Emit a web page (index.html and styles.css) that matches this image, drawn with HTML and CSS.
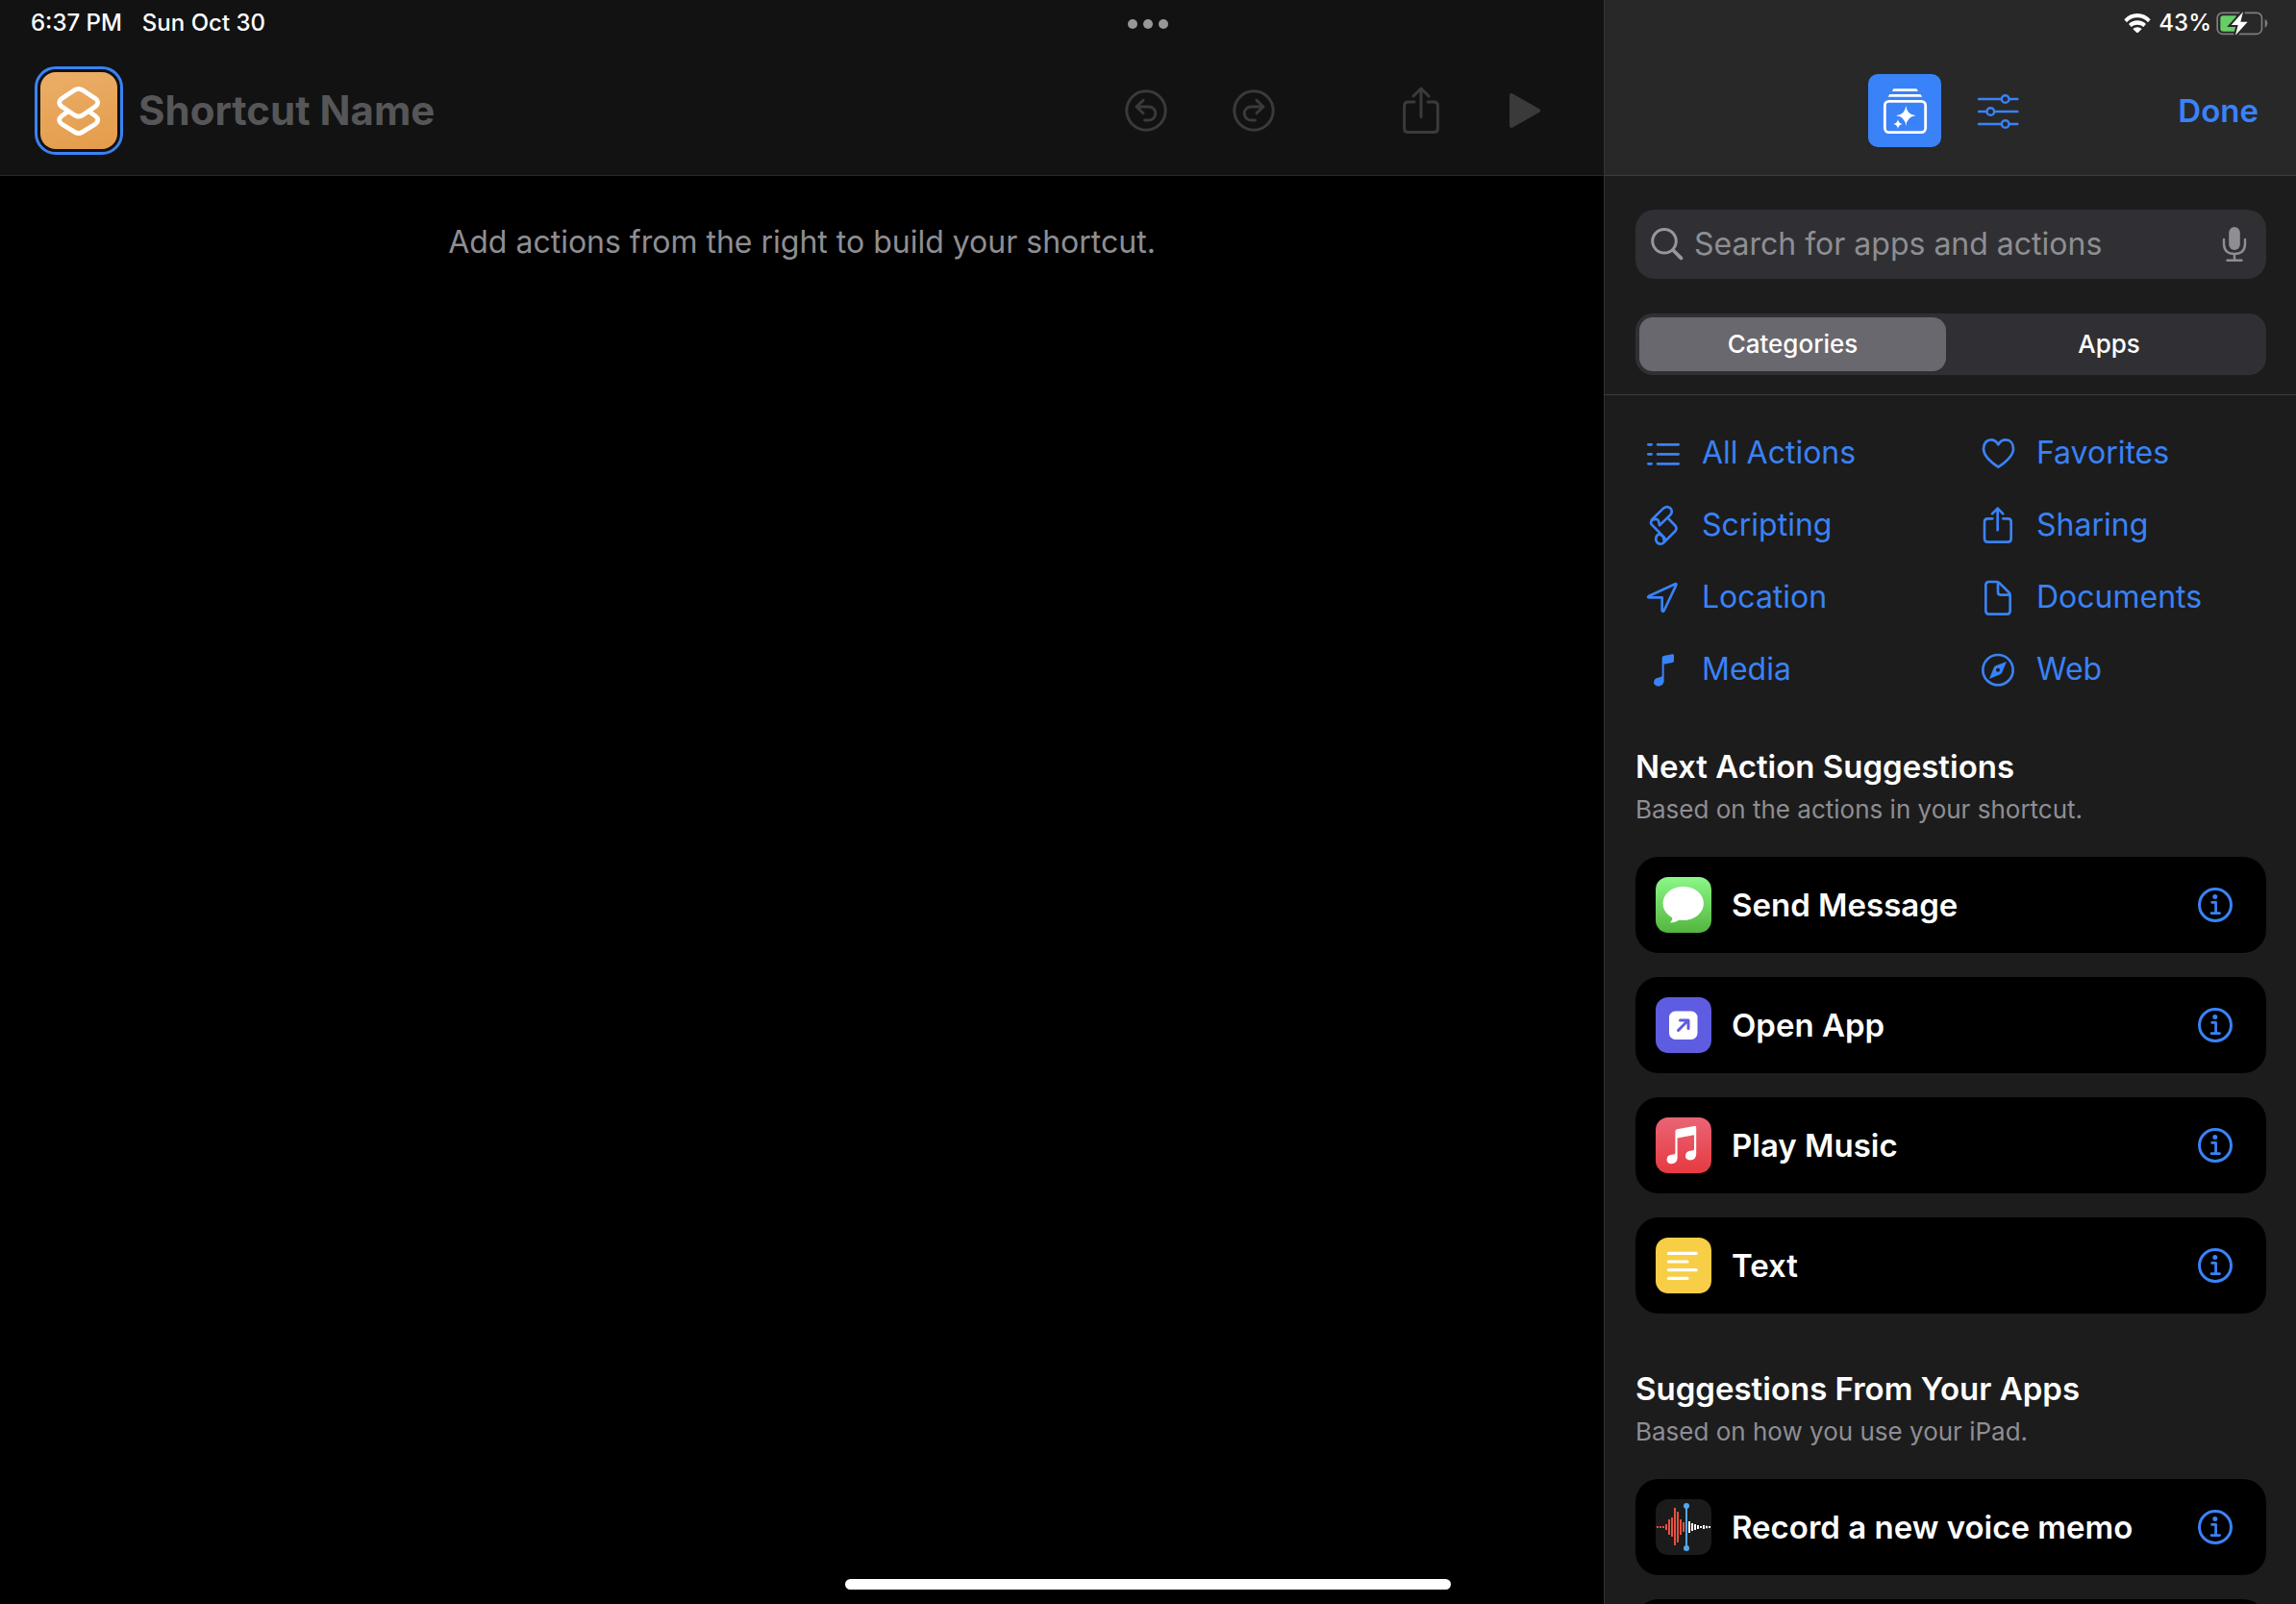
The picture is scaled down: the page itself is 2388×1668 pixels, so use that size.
FILE: index.html
```html
<!DOCTYPE html>
<html lang="en">
<head>
<meta charset="utf-8">
<meta name="viewport" content="width=device-width, initial-scale=1">
<title>Shortcuts</title>
<link rel="stylesheet" href="styles.css">
</head>
<body>
<svg class="defs" aria-hidden="true">
  <symbol id="info" viewBox="0 0 36 36">
    <circle cx="18" cy="18" r="16.500" fill="none" stroke="currentColor" stroke-width="3"/>
    <circle cx="17.800" cy="9.600" r="2.500" fill="currentColor"/>
    <path d="M14.600 15.400H18.600V26.400M14 26.600H22.600" fill="none" stroke="currentColor" stroke-width="2.700" stroke-linecap="round" stroke-linejoin="round"/>
  </symbol>
</svg>

<div class="app">
  <main class="editor">
    <header class="bar">
      <div class="status">
        <span>6:37 PM</span>
        <span>Sun Oct 30</span>
      </div>
      <div class="toolbar">
        <button class="app-icon" aria-label="Choose icon">
          <svg width="80" height="80" viewBox="0 0 80 80" fill="none" stroke="#fff" stroke-width="4.8" stroke-linejoin="round">
            <path d="M35.8 18.6Q39.7 16.2 43.6 18.6L57.2 27.4Q62.4 31.6 57.2 35.8L43.6 44.9Q39.7 47.3 35.8 44.9L22.2 35.8Q17 31.6 22.2 27.4Z"/>
            <path d="M28.6 41L22.2 45.6Q17 49.8 22.2 54L35.8 62.4Q39.7 64.8 43.6 62.4L57.2 54Q62.4 49.8 57.2 45.6L50.8 41"/>
          </svg>
        </button>
        <input class="name" type="text" placeholder="Shortcut Name" aria-label="Shortcut Name">
        <div class="tools">
          <button aria-label="Undo">
            <svg width="44" height="44" viewBox="0 0 44 44" class="line">
              <circle cx="22" cy="22" r="20.2"/>
              <path d="M19 11.4L12 18L19 24.6M12.4 18H24.8a7 7 0 0 1 0 14H20.6"/>
            </svg>
          </button>
          <button aria-label="Redo">
            <svg width="44" height="44" viewBox="0 0 44 44" class="line">
              <circle cx="22" cy="22" r="20.2"/>
              <path d="M25 11.4L32 18L25 24.6M31.6 18H19.2a7 7 0 0 0 0 14H23.4"/>
            </svg>
          </button>
          <button class="share" aria-label="Share">
            <svg width="40" height="50" viewBox="0 0 40 50" class="line">
              <path d="M13 16H6.5Q2.6 16 2.6 20V43.500Q2.600 47.500 6.500 47.500H33.500Q37.400 47.500 37.400 43.500V20Q37.400 16 33.500 16H27"/>
              <path d="M20 31.500V2.600M12 10L20 2L28 10"/>
            </svg>
          </button>
          <button aria-label="Run">
            <svg width="40" height="40" viewBox="0 0 40 40">
              <path d="M4 4.500Q4 1.200 7.400 2.400L35 18.200Q37.200 20 35 21.800L7.400 37.600Q4 38.800 4 35.500Z" fill="currentColor"/>
            </svg>
          </button>
        </div>
      </div>
    </header>
    <p class="hint">Add actions from the right to build your shortcut.</p>
  </main>

  <aside class="library">
    <header class="bar bar-light">
      <div class="status status-end">
        <svg class="wifi" width="28" height="20" viewBox="840 41 84 60" fill="#fff" role="img" aria-label="Wi-Fi">
          <path d="M841 60Q858 41 882 41T923 60L915 69Q902 54 882 54T849 69Z"/>
          <path d="M855 74Q866 63 882 63T909 74L901 83Q893 76 882 76T863 83Z"/>
          <path d="M868 89Q873 84 882 84T896 89L882 103Z"/>
        </svg>
        <span class="percent">43%</span>
        <svg width="54" height="25" viewBox="1124 35 162 75" role="img" aria-label="Battery charging">
          <rect x="1127.500" y="39" width="139" height="66" rx="16" fill="none" stroke="#7e7e7e" stroke-width="5"/>
          <path d="M1276 58Q1284 63 1284 72T1276 86Z" fill="#7e7e7e"/>
          <path d="M1146 48H1186V97H1146Q1137 97 1137 88V57Q1137 48 1146 48Z" fill="#67ce67"/>
          <path d="M1208 36L1171 77H1192L1184 109L1222 67H1200Z" fill="#fff" stroke="#282828" stroke-width="12" paint-order="stroke"/>
        </svg>
      </div>
      <div class="panel-nav">
        <div class="modes">
          <button class="mode mode-on" aria-label="Action library">
            <svg width="76" height="76" viewBox="39 231 228 228">
              <path d="M118 277H190L195 285H114ZM106 294H202L208 302H101Z" fill="#fff"/>
              <rect x="91" y="316" width="127" height="97" rx="13" fill="none" stroke="#fff" stroke-width="8.500"/>
              <path d="M157 330Q160 358 188 361Q160 364 157 393Q154 364 126 361Q154 358 157 330Z" fill="#fff"/>
              <path d="M132 372Q134 385 147 387Q134 389 132 402Q130 389 117 387Q130 385 132 372Z" fill="#fff"/>
            </svg>
          </button>
          <button class="mode" aria-label="Shortcut settings">
            <svg width="76" height="76" viewBox="328 231 228 228" fill="none" stroke="currentColor" stroke-width="7.500" stroke-linecap="round">
              <path d="M382 309H452M479 309H503M382 348H406M432 348H503M382 387H452M479 387H503"/>
              <circle cx="465" cy="309" r="11.500"/><circle cx="419" cy="348" r="11.500"/><circle cx="465" cy="387" r="11.500"/>
            </svg>
          </button>
        </div>
        <button class="done">Done</button>
      </div>
    </header>

    <div class="filters">
      <label class="search">
        <svg width="34" height="34" viewBox="0 0 34 34" fill="none" stroke="#97979d" stroke-linecap="round">
          <circle cx="14" cy="13.800" r="12.300" stroke-width="3"/><path d="M23 23L31.400 31.400" stroke-width="3.800"/>
        </svg>
        <input type="text" placeholder="Search for apps and actions" aria-label="Search for apps and actions">
        <button class="mic" aria-label="Dictate">
          <svg width="26" height="38" viewBox="0 0 26 38">
            <rect x="7.200" y="1" width="11.600" height="24" rx="5.800" fill="#8e8e93"/>
            <path d="M2 14V18Q2 29 13 29T24 18V14M13 29V35.400M5.500 35.700H20.500" fill="none" stroke="#8e8e93" stroke-width="2.400" stroke-linecap="round"/>
          </svg>
        </button>
      </label>
      <div class="segments" role="radiogroup" aria-label="Browse by">
        <label><input type="radio" name="browse" checked><span>Categories</span></label>
        <label><input type="radio" name="browse"><span>Apps</span></label>
      </div>
    </div>

    <div class="scroll">
      <nav class="categories" aria-label="Categories">
        <a href="#all">
          <svg viewBox="24 27 132 132"><path d="M43 67H53M72 67H137M43 97H53M72 97H137M43 127H53M72 127H137"/></svg>
          All Actions</a>
        <a href="#favorites">
          <svg viewBox="1068 27 132 132"><path d="M1135 137C1120 127 1089 105 1089 80C1089 62 1100 52 1112 52C1123 52 1131 59 1135 67C1139 59 1147 52 1159 52C1172 52 1182 62 1182 80C1182 105 1150 127 1135 137Z"/></svg>
          Favorites</a>
        <a href="#scripting">
          <svg viewBox="24 255 132 132"><path d="M54 304L90 269Q102 260 111 268Q121 277 112 289L78 322L76 311Q72 299 60 304Q52 303 51 315Q52 319 57 323L92 359Q99 367 91 376M78 349Q65 354 67 368Q70 380 81 380Q87 380 91 376L128 339Q133 332 128 324L104 299M79 350Q93 354 92 372"/></svg>
          Scripting</a>
        <a href="#sharing">
          <svg viewBox="1068 255 132 132"><path d="M1117 301H1102Q1092 301 1092 311V364Q1092 374 1102 374H1165Q1175 374 1175 364V311Q1175 301 1165 301H1150M1133 337V269M1116 286L1133 269L1150 286"/></svg>
          Sharing</a>
        <a href="#location">
          <svg viewBox="24 480 132 132"><path d="M127 505L44 543Q40 547 45 547H86V588Q89 594 92 588L130 508Q131 503 127 505Z"/></svg>
          Location</a>
        <a href="#documents">
          <svg viewBox="1068 480 132 132"><path d="M1106 498H1130Q1135 498 1139 502L1168 531Q1172 535 1172 540V589Q1172 599 1162 599H1106Q1096 599 1096 589V508Q1096 498 1106 498ZM1134 500V530Q1134 539 1143 539H1171"/></svg>
          Documents</a>
        <a href="#media">
          <svg viewBox="24 700 132 132"><path class="solid" d="M86 731Q86 725 91 724L118 719Q123 718 123 723V740Q123 744 119 745L92 750V803Q91 818 75 819Q60 818 60 806Q61 794 74 792Q86 790 86 785Z"/></svg>
          Media</a>
        <a href="#web">
          <svg viewBox="1068 700 132 132"><circle cx="1134" cy="768" r="47"/><path class="solid" fill-rule="evenodd" d="M1161 742L1147 776Q1145 780 1141 782L1107 796L1121 761Q1123 757 1127 755ZM1134 762A6 6 0 1 0 1134 774A6 6 0 1 0 1134 762Z"/></svg>
          Web</a>
      </nav>

      <section class="group">
        <h2>Next Action Suggestions</h2>
        <p>Based on the actions in your shortcut.</p>
        <ul>
          <li>
            <svg class="tile tile-messages" viewBox="0 0 58 58" fill="#fff"><ellipse cx="28.700" cy="27.500" rx="21.200" ry="17.600"/><path d="M17 39Q18.500 44 15 47.400Q21 47.500 26 43.500Z"/></svg>
            <span>Send Message</span>
            <button aria-label="About Send Message"><svg class="info"><use href="#info"/></svg></button>
          </li>
          <li>
            <svg class="tile tile-open" viewBox="0 0 58 58"><rect x="14" y="14.500" width="29.500" height="29.500" rx="6.500" fill="#fff"/><path d="M23.500 34.500L33.600 24.300M25.500 24H34V32.500" fill="none" stroke="#5e5ce0" stroke-width="3" stroke-linecap="round" stroke-linejoin="round"/></svg>
            <span>Open App</span>
            <button aria-label="About Open App"><svg class="info"><use href="#info"/></svg></button>
          </li>
          <li>
            <svg class="tile tile-music" viewBox="0 0 58 58" fill="#fff"><path d="M20.400 14.500Q20.400 12.600 22.200 12.200L40.200 8.900Q42.200 8.600 42.200 10.400V38.500Q41.600 44.300 35.800 44.500Q30.800 44 31 39.500Q31.400 35.600 36 34.800L39.200 34.200Q40 34 40 32.800V18.200L22.600 21.600V42.500Q22 48 16.500 48.300Q11.400 47.800 11.600 43.400Q12 39.500 16.400 38.800L19.600 38.200Q20.400 38 20.400 36.800Z"/></svg>
            <span>Play Music</span>
            <button aria-label="About Play Music"><svg class="info"><use href="#info"/></svg></button>
          </li>
          <li>
            <svg class="tile tile-text" viewBox="0 0 58 58" fill="none" stroke="#fff" stroke-width="3.200" stroke-linecap="round"><path d="M13.400 16.400H42.200M13.400 25H33M13.400 33.700H42.200M13.400 42.400H33"/></svg>
            <span>Text</span>
            <button aria-label="About Text"><svg class="info"><use href="#info"/></svg></button>
          </li>
        </ul>
      </section>

      <section class="group">
        <h2>Suggestions From Your Apps</h2>
        <p>Based on how you use your iPad.</p>
        <ul>
          <li>
            <svg class="tile tile-memo" viewBox="36 0 174 174" fill="none" stroke-width="6">
              <path stroke="#e5503f" d="M42 84V90M51 84V90M60 84V90M69 78V96M78 63V111M87 57V117M96 27V144M105 39V135M114 63V111M123 72V102"/>
              <path stroke="#fff" d="M141 69V105M150 75V99M159 78V96M168 81V93M177 84V90M186 81V93M195 83V91M204 84V90"/>
              <path stroke="#54a9f0" d="M132 20V153"/>
              <circle cx="132" cy="21" r="9" fill="#54a9f0"/><circle cx="132" cy="153" r="9" fill="#54a9f0"/>
            </svg>
            <span>Record a new voice memo</span>
            <button aria-label="About Record a new voice memo"><svg class="info"><use href="#info"/></svg></button>
          </li>
          <li></li>
        </ul>
      </section>
    </div>
  </aside>
</div>

<div class="multitask" aria-hidden="true"><i></i><i></i><i></i></div>
<div class="home-indicator" aria-hidden="true"></div>
</body>
</html>
```
FILE: styles.css
```css
* {
  box-sizing: border-box;
}

body {
  margin: 0;
  background: #000;
  color: #fff;
  font-family: Inter, "Liberation Sans", sans-serif;
  font-size: 32px;
  line-height: 40px;
}

button,
input {
  margin: 0;
  padding: 0;
  border: 0;
  background: none;
  color: inherit;
  font: inherit;
}

button {
  display: block;
}

input:focus {
  outline: none;
}

svg {
  display: block;
  flex: none;
}

h2,
p,
ul {
  margin: 0;
  padding: 0;
}

.defs {
  display: none;
}

.app {
  display: grid;
  grid-template-columns: minmax(0, 1fr) minmax(0, min(31vw, 720px));
  height: 100vh;
  overflow: hidden;
}

/* Header bars */

.bar {
  background: #121212;
  border-bottom: 1px solid #292929;
}

.bar-light {
  background: #282828;
  border-bottom-color: #3d3d3d;
}

.status {
  display: flex;
  align-items: center;
  gap: 21px;
  height: 48px;
  padding: 0 32px;
  font-size: 24px;
  font-weight: 500;
}

.status-end {
  justify-content: flex-end;
  gap: 5px;
  padding: 0 29px;
}

.wifi {
  margin-right: 3px;
}

.toolbar {
  display: flex;
  align-items: center;
  height: 134px;
  padding: 0 62px 0 36px;
}

.app-icon {
  padding: 3px;
  border: 3px solid #3a82f7;
  border-radius: 22px;
}

.app-icon svg {
  border-radius: 16px;
  background: linear-gradient(165deg, #ebae68, #e49c4a);
}

.name {
  flex: 1;
  min-width: 0;
  margin-left: 16px;
  font-size: 42px;
  line-height: 52px;
  font-weight: 700;
}

.name::placeholder {
  color: #565658;
  opacity: 1;
}

.tools {
  display: flex;
  align-items: center;
  gap: 68px;
  color: #3a3a3a;
}

.share {
  margin-left: 64px;
}

.line {
  fill: none;
  stroke: currentColor;
  stroke-width: 3;
  stroke-linecap: round;
  stroke-linejoin: round;
}

.hint {
  padding-top: 49px;
  color: #8e8e93;
  text-align: center;
}

/* Action library */

.library {
  display: flex;
  flex-direction: column;
  min-height: 0;
  border-left: 1px solid #333;
  background: #1c1c1c;
}

.panel-nav {
  display: grid;
  grid-template-columns: 1fr auto 1fr;
  align-items: center;
  height: 134px;
  padding: 0 39px 0 40px;
}

.modes {
  display: flex;
  grid-column: 2;
  gap: 21px;
}

.mode {
  color: #3a82f7;
}

.mode-on {
  border-radius: 10px;
  background: #3a82f7;
}

.done {
  justify-self: end;
  color: #3a82f7;
  font-size: 33px;
  font-weight: 600;
}

.filters {
  display: grid;
  gap: 36px;
  padding: 35px 31px 20px 32px;
  border-bottom: 1px solid #3d3d3d;
}

.search {
  display: flex;
  align-items: center;
  gap: 11px;
  height: 72px;
  padding: 0 20px 0 16px;
  border-radius: 20px;
  background: #303034;
}

.search input {
  flex: 1;
  min-width: 0;
}

.search input::placeholder {
  color: #8e8e93;
  opacity: 1;
}

.segments {
  display: grid;
  grid-template-columns: 1fr 1fr;
  gap: 10px;
  height: 64px;
  padding: 4px;
  border-radius: 18px;
  background: #303034;
  font-size: 26px;
  font-weight: 500;
}

.segments label {
  display: grid;
  place-items: center;
  border-radius: 14px;
}

.segments label:has(:checked) {
  background: #69686e;
}

.segments input {
  appearance: none;
  grid-area: 1 / 1;
}

.segments span {
  grid-area: 1 / 1;
}

.scroll {
  flex: 1;
  min-height: 0;
  overflow: hidden;
  padding: 38px 31px 0 32px;
}

.categories {
  display: grid;
  grid-template-columns: 348px 1fr;
  row-gap: 31px;
  padding: 0 0 1px 7px;
}

.categories a {
  display: flex;
  align-items: center;
  gap: 18px;
  color: #3a82f7;
  text-decoration: none;
}

.categories svg {
  width: 44px;
  height: 44px;
  fill: none;
  stroke: currentColor;
  stroke-width: 8;
  stroke-linecap: round;
  stroke-linejoin: round;
}

.categories .solid {
  fill: currentColor;
  stroke: none;
}

.group {
  padding-top: 58px;
}

.group h2 {
  font-size: 33px;
  font-weight: 600;
}

.group p {
  margin-top: 9px;
  color: #8e8e93;
  font-size: 26px;
  line-height: 32px;
}

.group ul {
  display: grid;
  gap: 25px;
  margin-top: 33px;
  list-style: none;
}

.group li {
  display: flex;
  align-items: center;
  gap: 21px;
  height: 100px;
  padding: 0 35px 0 21px;
  border-radius: 24px;
  background: #000;
  font-size: 33px;
  font-weight: 600;
}

.group li span {
  flex: 1;
}

.group li button {
  color: #3a82f7;
}

.info {
  width: 36px;
  height: 36px;
}

.tile {
  width: 58px;
  height: 58px;
  border-radius: 13px;
}

.tile-messages {
  background: linear-gradient(#8cf787, #53b53f);
}

.tile-open {
  background: #5e5ce0;
}

.tile-music {
  background: linear-gradient(#ea6475, #e63a41);
}

.tile-text {
  background: #f7ce46;
}

.tile-memo {
  background: #1b1b1b;
}

/* System overlays, centred on the whole screen */

.multitask {
  position: absolute;
  top: 20px;
  left: 50%;
  display: flex;
  gap: 6px;
  transform: translateX(-50%);
}

.multitask i {
  width: 10px;
  height: 10px;
  border-radius: 50%;
  background: #989898;
}

.home-indicator {
  position: absolute;
  bottom: 15px;
  left: 50%;
  width: 630px;
  height: 11px;
  border-radius: 6px;
  background: #fff;
  transform: translateX(-50%);
}
```
